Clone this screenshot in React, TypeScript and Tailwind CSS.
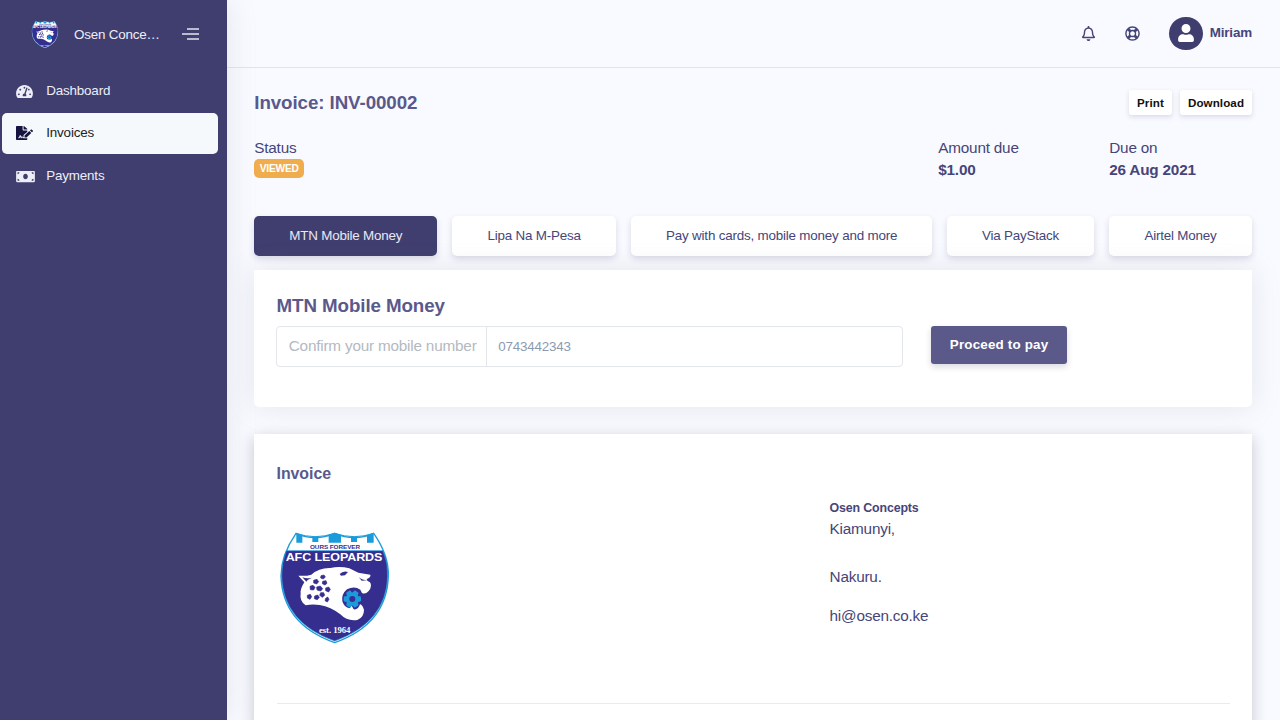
import React from "react";
import { FaTachometerAlt, FaFileSignature, FaMoneyBill, FaUser, FaRegLifeRing, FaRegBell } from "react-icons/fa";

function ClubCrest({ className }: { className: string }) {
  return (
    <svg viewBox="0 0 420 405" preserveAspectRatio="none" className={className} aria-label="AFC Leopards">
      <path d="M93 40 Q150 66 209 40 Q268 66 326 40 Q372 105 370 168 Q366 312 209 368 Q52 312 48 168 Q48 105 93 40Z" fill="#fff" stroke="#1a9bdc" strokeWidth="4" />
      <path d="M64 92 H354 Q370 130 368 168 Q364 308 209 363 Q54 308 50 168 Q50 128 64 92Z" fill="#362e8e" stroke="#1a9bdc" strokeWidth="2" />
      <path d="M93 40 L112 48 V68 H94 V47Z M142 51 L160 49 V66 H142Z M191 46 L209 39 L228 46 V68 H191Z M258 49 L276 51 V66 H258Z M306 48 L326 40 V68 H306Z" fill="#1a9bdc" />
      <path d="M93 40 Q150 60 209 40 Q268 60 326 40" fill="none" stroke="#1a9bdc" strokeWidth="3" />
      <text x="210" y="87" textAnchor="middle" textLength="150" lengthAdjust="spacingAndGlyphs" fontSize="18" fontWeight="700" fontFamily="Liberation Sans, sans-serif" fill="#362e8e">OURS FOREVER</text>
      <text x="207" y="122" textAnchor="middle" textLength="290" lengthAdjust="spacingAndGlyphs" fontSize="32" fontWeight="700" fontFamily="Liberation Sans, sans-serif" fill="#fff">AFC LEOPARDS</text>
      <path d="M100 167 Q122 169 139 164 Q162 143 196 144 Q224 137 253 145 L280 158 L316 164 Q318 172 307 176 Q301 179 315 187 Q323 199 311 213 Q301 224 291 219 L286 209 Q268 196 246 208 Q229 222 232 244 Q238 263 254 265 L260 257 L266 268 Q280 270 285 253 Q293 255 297 270 Q297 292 277 300 Q247 305 226 283 Q198 261 164 255 Q141 252 122 256 Q103 244 107 220 Q105 207 118 187Z" fill="#fff" />
      <path d="M112 172 Q126 177 141 173 L128 180 L124 185Z M224 162 Q235 151 249 156 L240 166 L228 167Z M281 171 Q292 181 307 181 L290 182Z" fill="#362e8e" />
      <path d="M146 181 l10 -3 5 7 -6 7 -9 -3Z M168 167 l9 -2 4 6 -6 6 -8 -3Z M173 184 l10 -2 3 8 -6 5 -8 -4Z M135 199 l9 -3 6 6 -4 8 -10 -1Z M155 201 l11 -3 7 8 -6 7 -11 -3Z M182 204 l9 -3 5 7 -5 8 -9 -4Z M127 226 l9 -3 4 7 -5 8 -8 -4Z M149 228 l9 -3 5 7 -6 7 -9 -3Z M167 218 l9 0 3 8 -7 6 -8 -6Z M182 235 l6 -4 4 7 -5 8 -7 -4Z" fill="#362e8e" stroke="#362e8e" strokeWidth="2" />
      <g fill="#1a9bdc">
        <circle cx="262" cy="237" r="20" />
        <rect x="236" y="229" width="52" height="16" rx="4" />
        <rect x="236" y="229" width="52" height="16" rx="4" transform="rotate(60 262 237)" />
        <rect x="236" y="229" width="52" height="16" rx="4" transform="rotate(120 262 237)" />
      </g>
      <circle cx="262" cy="237" r="9" fill="#362e8e" />
      <text x="209" y="339" textAnchor="middle" textLength="94" lengthAdjust="spacingAndGlyphs" fontSize="26" fontWeight="700" fontFamily="Liberation Serif, serif" fill="#fff">est. 1964</text>
    </svg>
  );
}

const navItems = [
  { label: "Dashboard", icon: <FaTachometerAlt className="h-[15px] w-[17px]" />, active: false },
  { label: "Invoices", icon: <FaFileSignature preserveAspectRatio="none" className="mb-px h-[14px] w-[17px] text-[#15133f]" />, active: true },
  { label: "Payments", icon: <FaMoneyBill className="h-[15px] w-[19px]" />, active: false },
];

function Sidebar() {
  return (
    <aside className="z-10 w-[226.5px] shrink-0 bg-[#3f3e6e] text-[#eeeef8] shadow-[0_0_28px_rgba(140,152,164,0.2)]">
      <div className="flex h-[69px] items-center pl-[28px]">
        <ClubCrest className="h-[33px] w-[34px]" />
        <span className="ml-[12px] w-[86px] pt-px text-[13.4px] tracking-[-0.19px] whitespace-nowrap">Osen Conce…</span>
        <svg viewBox="0 0 18 12" className="mb-[2px] ml-[22px] h-3 w-[18px]" fill="none" stroke="#e4e5f0" strokeWidth="1.6">
          <path d="M5 1H17M0 6H17M5 11H17" />
        </svg>
      </div>
      <nav className="flex flex-col gap-[2px] pt-[2px] pr-[9px] pl-[2px]">
        {navItems.map((item) => (
          <a
            key={item.label}
            className={
              item.active
                ? "flex h-[41px] items-center rounded-[5px] bg-[#f5f9fc] pl-[14.3px] text-[13.4px] tracking-[-0.18px] text-[#222]"
                : "flex h-[40px] items-center rounded-[5px] pl-[14.3px] text-[13.4px] tracking-[-0.18px]"
            }
          >
            <span className="flex w-[30px] items-center">{item.icon}</span>
            {item.label}
          </a>
        ))}
      </nav>
    </aside>
  );
}

function TopBar() {
  return (
    <header className="flex h-[68px] shrink-0 items-center justify-end border-b border-[#e2e4ec] pr-7 pb-px">
      <FaRegBell className="size-[15px]" />
      <FaRegLifeRing className="ml-[29px] size-[15px]" />
      <span className="ml-[29px] flex h-[33px] w-[34px] items-center justify-center rounded-full bg-[#3f3e6e]">
        <FaUser className="size-[18px] text-white" />
      </span>
      <span className="ml-[7px] text-[13.4px] font-bold tracking-[-0.15px]">Miriam</span>
    </header>
  );
}

const tabs = [
  { label: "MTN Mobile Money", className: "w-[183px] bg-[#3f3e6e] text-[#e9e9f4]" },
  { label: "Lipa Na M-Pesa", className: "w-[164px] bg-white" },
  { label: "Pay with cards, mobile money and more", className: "w-[301px] bg-white" },
  { label: "Via PayStack", className: "w-[147px] bg-white" },
  { label: "Airtel Money", className: "w-[143px] bg-white" },
];

export default function App() {
  return (
    <div className="flex h-[720px] w-[1280px] overflow-hidden bg-[#f9faff] font-['Liberation_Sans',Arial,sans-serif] text-[15.3px] tracking-[-0.2px] text-[#464579]">
      <Sidebar />
      <div className="flex min-w-0 flex-1 flex-col">
        <TopBar />
        <main className="flex flex-col pt-[22px] pr-7 pl-[27.75px]">
          <div className="flex h-[25px] items-center justify-between">
            <h1 className="pt-[2px] text-[18.74px] font-bold tracking-[-0.08px] text-[#5a598b]">Invoice: INV-00002</h1>
            <div className="flex gap-2 text-[11.6px] font-bold tracking-[0.1px] text-[#111]">
              <button className="h-[25px] w-[43px] rounded-[3px] bg-white shadow-[0_2px_5px_rgba(50,50,93,0.16)]">Print</button>
              <button className="h-[25px] w-[72px] rounded-[3px] bg-white shadow-[0_2px_5px_rgba(50,50,93,0.16)]">Download</button>
            </div>
          </div>

          <div className="mt-[21px] flex h-[80px] pt-px leading-[22px]">
            <div className="w-[684px]">
              <div>Status</div>
              <div className="flex h-[19px] w-[50px] items-center justify-center rounded-[5px] bg-[#f0ad4e] pt-px text-[10.2px] font-bold tracking-[-0.18px] text-white">VIEWED</div>
            </div>
            <div className="w-[171px]">
              <div>Amount due</div>
              <div className="font-bold">$1.00</div>
            </div>
            <div>
              <div>Due on</div>
              <div className="font-bold">26 Aug 2021</div>
            </div>
          </div>

          <div className="flex gap-[15px]">
            {tabs.map((tab) => (
              <div key={tab.label} className={`flex h-10 items-center justify-center rounded-[5px] pt-px text-[13.4px] tracking-[-0.19px] shadow-[0_3px_6px_rgba(50,50,93,0.16)] ${tab.className}`}>
                {tab.label}
              </div>
            ))}
          </div>

          <section className="mt-[14px] h-[137px] shrink-0 rounded-b-[5px] bg-white pt-[24px] pr-[22px] pl-[22.3px] shadow-[0_0_28px_rgba(140,152,164,0.2)]">
            <h2 className="text-[18.74px] leading-[24px] font-bold tracking-[-0.08px] text-[#5a598b]">MTN Mobile Money</h2>
            <div className="-ml-[0.3px] mt-[8px] flex items-start">
              <div className="flex h-[41px] w-[626.8px] rounded-[4px] border border-[#e3e6ea]">
                <span className="flex w-[210px] items-center border-r border-[#e3e6ea] pl-[11.5px] whitespace-nowrap text-[#b3b9c1]">Confirm your mobile number</span>
                <span className="flex items-center pt-px pl-[11px] text-[13.4px] tracking-[-0.2px] text-[#8d9bb0]">0743442343</span>
              </div>
              <button className="ml-7 h-[38px] w-[136px] rounded-[3px] bg-[#5a5989] text-[13.4px] font-bold tracking-[0.18px] text-white shadow-[0_3px_6px_rgba(50,50,93,0.18)]">Proceed to pay</button>
            </div>
          </section>

          <section className="mt-[27px] h-[400px] shrink-0 bg-white px-[22.3px] pt-[30px] shadow-[0_4px_14px_rgba(20,20,40,0.22)]">
            <h3 className="text-[15.9px] leading-5 font-bold tracking-[-0.05px] text-[#5a598b]">Invoice</h3>
            <div className="flex h-[220px] border-b border-[#e9eaee]">
              <div className="w-[553px] pt-[36px]">
                <ClubCrest className="-ml-[11.7px] h-[135px] w-[140px]" />
              </div>
              <div className="pt-[14px] leading-[22px]">
                <div className="text-[12.4px] leading-[20px] font-bold tracking-[-0.14px]">Osen Concepts</div>
                <div>Kiamunyi,</div>
                <div className="mt-[26px]">Nakuru.</div>
                <div className="mt-[17px]">hi@osen.co.ke</div>
              </div>
            </div>
          </section>
        </main>
      </div>
    </div>
  );
}
